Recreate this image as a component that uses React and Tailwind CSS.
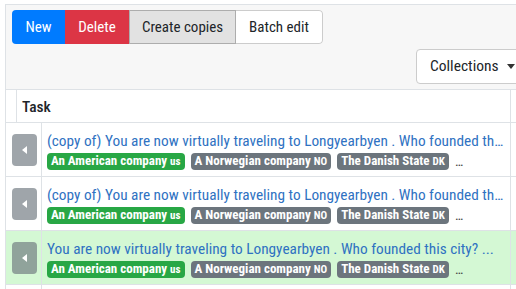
const font = { fontFamily: '"Roboto Condensed", "Noto Sans", sans-serif' };

const rows = [
  { title: '(copy of) You are now virtually traveling to Longyearbyen . Who founded this city? ...', active: false },
  { title: '(copy of) You are now virtually traveling to Longyearbyen . Who founded this city? ...', active: false },
  { title: 'You are now virtually traveling to Longyearbyen . Who founded this city? ...', active: true },
];

const answers = [
  { label: 'An American company', code: 'us', color: 'bg-[#28a745]' },
  { label: 'A Norwegian company', code: 'NO', color: 'bg-[#6c757d]' },
  { label: 'The Danish State', code: 'DK', color: 'bg-[#6c757d]' },
];

function Badge({ a }) {
  return (
    <span className={`${a.color} text-white font-bold text-[13px] leading-[15px] rounded-[4px] px-[4px] pb-[1px] whitespace-nowrap`}>
      {a.label} <span className="text-[11px]">{a.code}</span>
    </span>
  );
}

function TaskRow({ row }) {
  return (
    <div className={`flex h-[54px] border-b border-[#dee2e6] ${row.active ? 'bg-[#d4f8d4]' : 'bg-white'}`}>
      <div className="w-[36px] shrink-0 border-r border-[#dee2e6] flex items-center pl-[6px]">
        <div className="w-[25px] h-[32px] rounded-[4px] bg-[#6c757d]/65 flex items-center justify-center">
          <span className="w-0 h-0 border-y-[4px] border-y-transparent border-r-[5px] border-r-white" />
        </div>
      </div>
      <div className="w-[469px] shrink-0 border-r border-[#dee2e6] pl-[5px] pr-[5px] pt-[8px] min-w-0">
        <div className="text-[15.3px] leading-[20px] text-[#2f72c2] truncate">{row.title}</div>
        <div className="flex items-center gap-[6px] mt-[2px]">
          {answers.map((a) => <Badge key={a.code} a={a} />)}
          <span className="text-[14px] text-[#444] leading-[15px]">…</span>
        </div>
      </div>
      <div className="flex-1" />
    </div>
  );
}

export default function App() {
  return (
    <div className="bg-white h-[289px] overflow-hidden pt-[4px] pl-[5px]" style={font}>
      <div className="border-t border-l border-[#dee2e6]">
        <div className="bg-[#f7f7f7] h-[85px] border-b border-[#dee2e6] px-[6px] pt-[5px] text-[#212529]">
          <div className="flex h-[34px] w-fit rounded-[4px] overflow-hidden text-[15px]">
            <button className="w-[53px] bg-[#007bff] text-white">New</button>
            <button className="w-[64px] bg-[#dc3545] text-white">Delete</button>
            <button className="w-[107px] bg-[#e2e2e2] border border-[#adadad]">Create copies</button>
            <button className="w-[87px] bg-white border border-l-0 border-[#ccc] rounded-r-[4px]">Batch edit</button>
          </div>
          <div className="flex justify-end mt-[5px] -mr-[40px]">
            <button className="h-[35px] w-[134px] bg-white border border-[#ccc] rounded-[4px] text-[15.5px] flex items-center pl-[13px] gap-[8px]">
              Collections
              <span className="w-0 h-0 border-x-[4px] border-x-transparent border-t-[5px] border-t-[#333]" />
            </button>
          </div>
        </div>
        <div className="flex h-[33px] border-b border-[#dee2e6] bg-white">
          <div className="w-[11px] shrink-0 border-r border-[#dee2e6]" />
          <div className="w-[494px] shrink-0 border-r border-[#dee2e6] pl-[5px] pt-[3px] flex items-center text-[15.5px] font-medium text-[#212529]">Task</div>
        </div>
        {rows.map((r, i) => <TaskRow key={i} row={r} />)}
        <div className="flex h-[20px]">
          <div className="w-[36px] border-r border-[#dee2e6]" />
          <div className="w-[469px] border-r border-[#dee2e6]" />
        </div>
      </div>
    </div>
  );
}
